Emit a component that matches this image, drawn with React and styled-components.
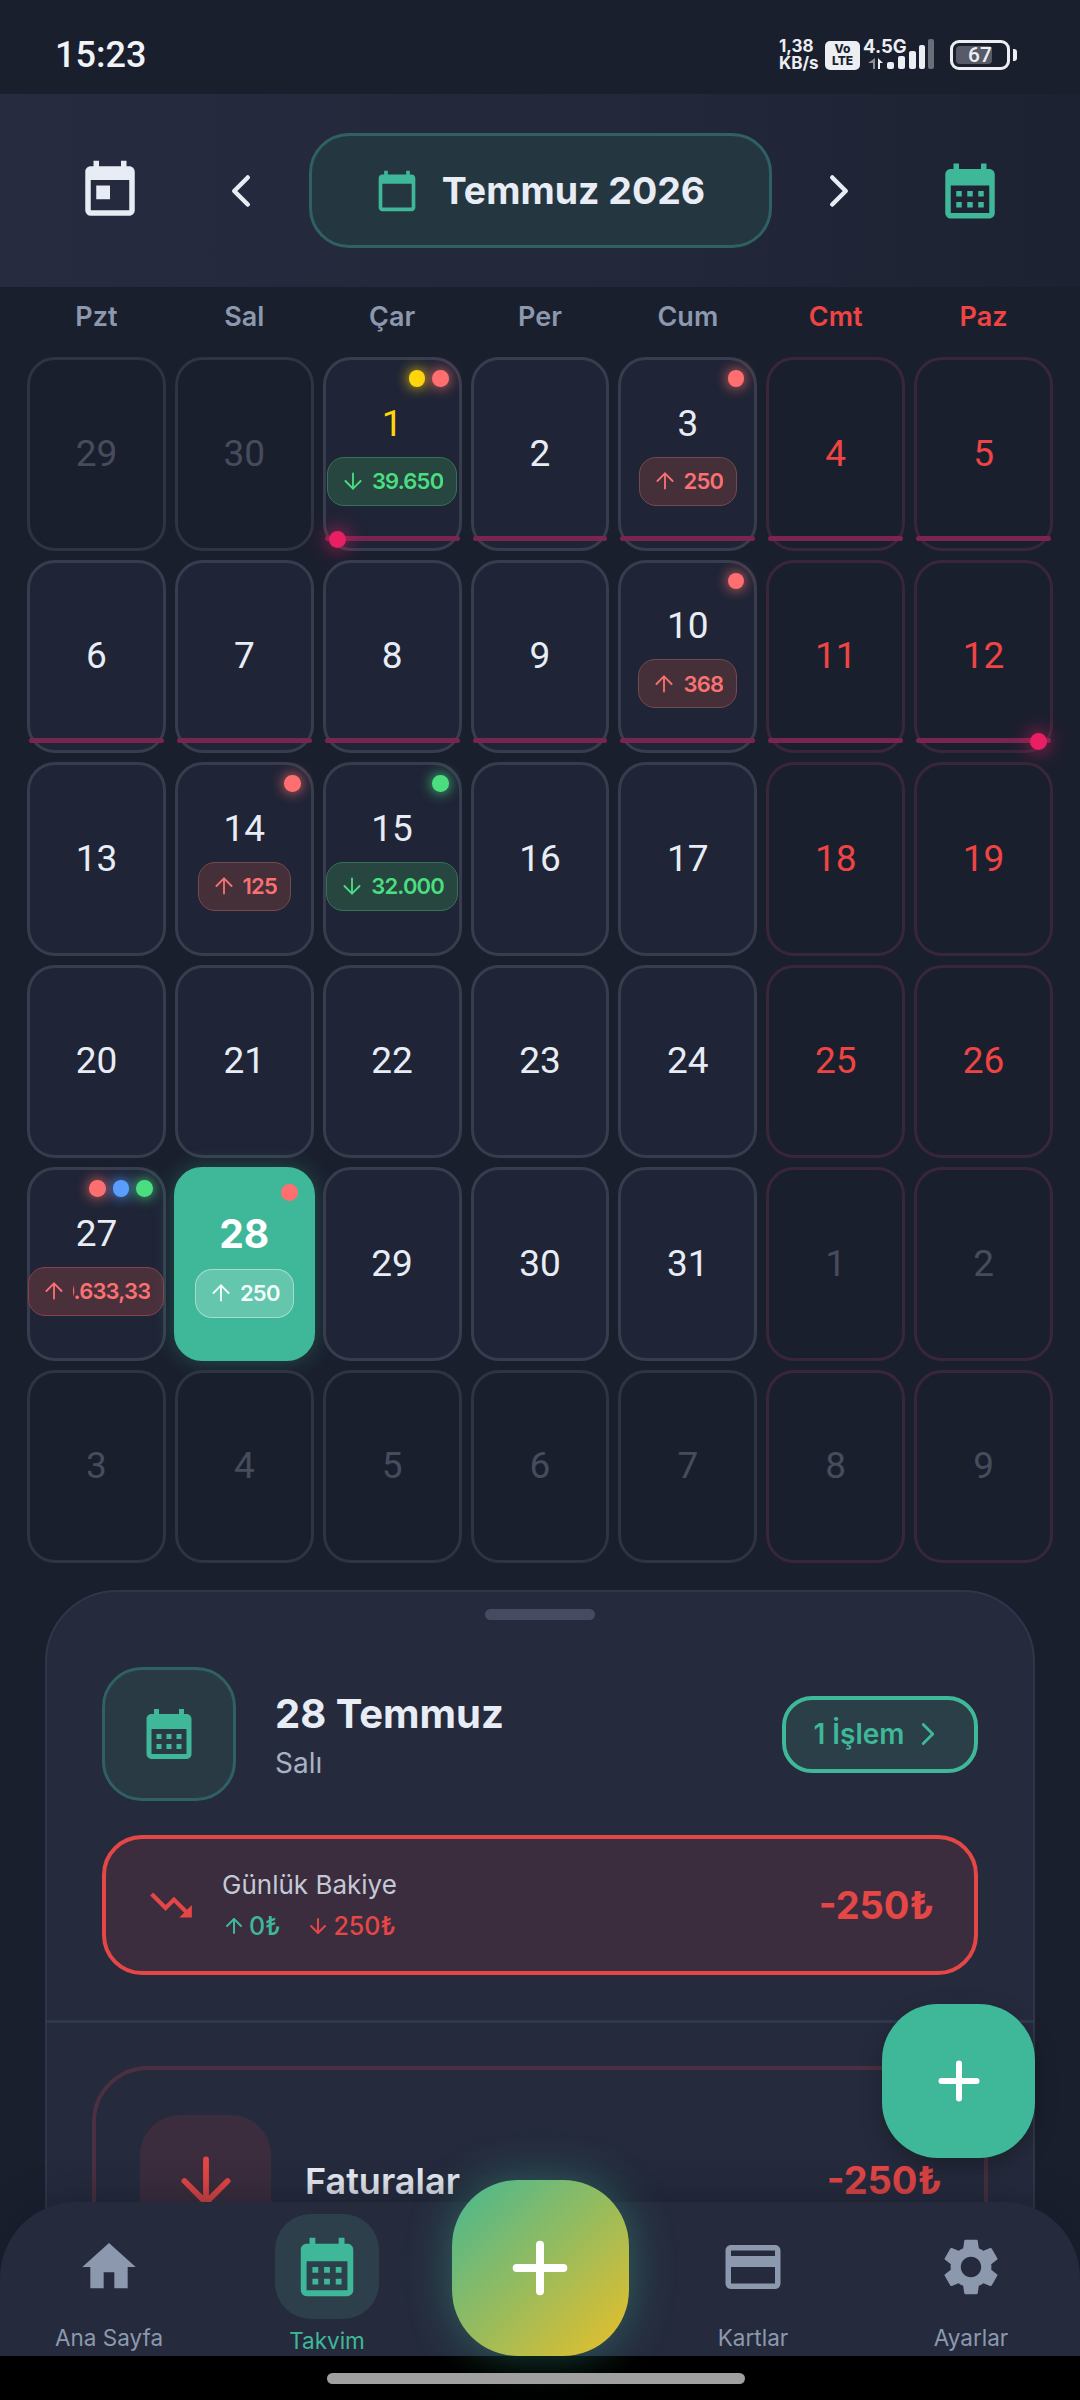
import styled, { createGlobalStyle } from "styled-components";
import { ArrowDown, ArrowUp, ChevronLeft, ChevronRight, Plus } from "lucide-react";
import {
    MdCalendarMonth,
    MdCalendarToday,
    MdCreditCard,
    MdHome,
    MdSettings,
    MdToday,
    MdTrendingDown,
} from "react-icons/md";

const TEAL = "#3eb898";
const RED = "#e54646";
const SOFT_RED = "#ff6f6f";
const GREEN = "#4ade80";
const BLUE = "#5b9dff";
const YELLOW = "#ffd60a";

const weekDays = ["Pzt", "Sal", "Çar", "Per", "Cum", "Cmt", "Paz"];

const days = [
    { n: 29, out: true },
    { n: 30, out: true },
    { n: 1, strip: true, marker: "start", today: true, dots: [YELLOW, SOFT_RED], chip: { dir: "down", value: "39.650", tone: "green" } },
    { n: 2, strip: true },
    { n: 3, strip: true, dots: [SOFT_RED], chip: { dir: "up", value: "250", tone: "red" } },
    { n: 4, strip: true },
    { n: 5, strip: true },
    { n: 6, strip: true },
    { n: 7, strip: true },
    { n: 8, strip: true },
    { n: 9, strip: true },
    { n: 10, strip: true, dots: [SOFT_RED], chip: { dir: "up", value: "368", tone: "red" } },
    { n: 11, strip: true },
    { n: 12, strip: true, marker: "end" },
    { n: 13 },
    { n: 14, dots: [SOFT_RED], chip: { dir: "up", value: "125", tone: "red" } },
    { n: 15, dots: [GREEN], chip: { dir: "down", value: "32.000", tone: "green" } },
    { n: 16 },
    { n: 17 },
    { n: 18 },
    { n: 19 },
    { n: 20 },
    { n: 21 },
    { n: 22 },
    { n: 23 },
    { n: 24 },
    { n: 25 },
    { n: 26 },
    { n: 27, dots: [SOFT_RED, BLUE, GREEN], chip: { dir: "up", value: "10.633,33", tone: "strong" } },
    { n: 28, selected: true, dots: [SOFT_RED], chip: { dir: "up", value: "250", tone: "light" } },
    { n: 29 },
    { n: 30 },
    { n: 31 },
    { n: 1, out: true },
    { n: 2, out: true },
    { n: 3, out: true },
    { n: 4, out: true },
    { n: 5, out: true },
    { n: 6, out: true },
    { n: 7, out: true },
    { n: 8, out: true },
    { n: 9, out: true },
];

const chipTones = {
    green: { bg: "#27463f", border: "#38705a", color: GREEN },
    red: { bg: "#45303a", border: "#76484f", color: "#f97171" },
    strong: { bg: "#4a303b", border: "#84434c", color: "#f97171" },
    light: { bg: "rgba(255,255,255,0.2)", border: "rgba(255,255,255,0.42)", color: "#f4fffb" },
};

const GlobalStyle = createGlobalStyle`
    html, body {
        margin: 0;
        padding: 0;
        background: #000;
    }
    * {
        box-sizing: border-box;
    }
`;

const Page = styled.div`
    position: relative;
    width: 1080px;
    height: 2400px;
    overflow: hidden;
    display: flex;
    flex-direction: column;
    background: #1a1f2e;
    color: #e8ecf4;
    font-family: Inter, "Noto Sans", sans-serif;
`;

const StatusBar = styled.div`
    height: 94px;
    flex-shrink: 0;
    padding: 0 70px 0 55px;
    display: flex;
    align-items: center;
    justify-content: space-between;
`;

const Clock = styled.span`
    font-family: Roboto, sans-serif;
    font-size: 36px;
    font-weight: 500;
    color: #f1f3f7;
    margin-top: 16px;
`;

const StatusIcons = styled.div`
    display: flex;
    align-items: center;
    margin-top: 16px;
`;

const NetSpeed = styled.div`
    width: 46px;
    font-size: 17px;
    font-weight: 700;
    line-height: 17px;
    color: #eceef2;
    text-align: left;
`;

const Volte = styled.div`
    width: 35px;
    height: 29px;
    border-radius: 5px;
    background: #eceef2;
    color: #1a1f2e;
    font-size: 12px;
    font-weight: 800;
    line-height: 12.5px;
    text-align: center;
    padding-top: 2px;
`;

const Signal = styled.div`
    width: 72px;
    height: 34px;
    margin-left: 3px;
    display: flex;
    flex-direction: column;
    font-size: 18.5px;
    font-weight: 700;
    line-height: 16px;
    color: #eceef2;
    position: relative;

    & svg {
        position: absolute;
        left: 0;
        top: 0;
    }
`;

const Battery = styled.div`
    position: relative;
    width: 60px;
    height: 30px;
    margin-left: 15px;
    border: 3px solid #eceef2;
    border-radius: 9px;
    padding: 3px;
    display: flex;
    align-items: center;
    justify-content: center;
    font-family: Roboto, sans-serif;
    font-size: 21px;
    font-weight: 500;
    color: #eceef2;

    &::before {
        content: "";
        position: absolute;
        left: 3px;
        top: 3px;
        bottom: 3px;
        width: 67%;
        border-radius: 4px;
        background: #565b67;
    }

    &::after {
        content: "";
        position: absolute;
        right: -10px;
        top: 6px;
        width: 4px;
        height: 12px;
        border-radius: 0 3px 3px 0;
        background: #eceef2;
    }

    & span {
        position: relative;
    }
`;

const Header = styled.header`
    height: 193px;
    flex-shrink: 0;
    display: flex;
    align-items: center;
    background: linear-gradient(90deg, #262b40, #222739 60%, #1d2233);
`;

const HeaderIconSlot = styled.div`
    width: ${(props) => props.$width}px;
    display: flex;
    justify-content: center;
    color: ${(props) => props.$color || "#e8ecf4"};
`;

const MonthNav = styled.div`
    flex: 1;
    margin: 0 -6px;
    display: flex;
    align-items: center;
    justify-content: space-between;
    color: #e8ecf4;
`;

const MonthPill = styled.div`
    width: 463px;
    height: 115px;
    border: 3px solid #2f6062;
    border-radius: 40px;
    background: #243740;
    display: flex;
    align-items: center;
    justify-content: center;
    gap: 23px;
    color: ${TEAL};
`;

const MonthTitle = styled.span`
    font-size: 37.5px;
    font-weight: 700;
    color: #e8ecf4;
`;

const WeekRow = styled.div`
    height: 70px;
    flex-shrink: 0;
    padding: 0 27px 12px;
    display: grid;
    grid-template-columns: repeat(7, minmax(0, 1fr));
    column-gap: 9px;
    align-items: center;
`;

const WeekDay = styled.div`
    text-align: center;
    font-size: 27px;
    font-weight: 600;
    color: ${(props) => (props.$weekend ? "#ef4444" : "#8c98ae")};
`;

const Grid = styled.div`
    padding: 0 27px;
    display: grid;
    grid-template-columns: repeat(7, minmax(0, 1fr));
    grid-auto-rows: 193.5px;
    gap: 9px;
    flex-shrink: 0;
`;

const Cell = styled.div`
    position: relative;
    min-width: 0;
    border-radius: 28px;
    border: 3px solid ${(props) => props.$borderColor};
    background: ${(props) => props.$bg};
    display: flex;
    flex-direction: column;
    align-items: center;
    justify-content: center;
    ${(props) =>
        props.$selected &&
        `
        box-shadow: 0 0 22px rgba(62, 184, 152, 0.32);
        margin: 0 -1px;
    `}
`;

const DayNumber = styled.div`
    font-family: ${(props) => (props.$selected ? "Inter, sans-serif" : "Roboto, sans-serif")};
    font-size: ${(props) => (props.$selected ? 39 : 37)}px;
    font-weight: ${(props) => (props.$selected ? 700 : 400)};
    line-height: ${(props) => (props.$selected ? 48 : 44)}px;
    color: ${(props) => props.$color};
`;

const Chip = styled.div`
    flex-shrink: 0;
    height: 49px;
    margin-top: 11px;
    padding: 0 13px 0 12px;
    border-radius: 17px;
    border: 1.5px solid ${(props) => chipTones[props.$tone].border};
    background: ${(props) => chipTones[props.$tone].bg};
    color: ${(props) => chipTones[props.$tone].color};
    display: flex;
    align-items: center;
    gap: 6px;
    font-size: 22px;
    font-weight: 600;
    letter-spacing: -0.8px;
`;

const ChipValue = styled.div`
    max-width: 77px;
    overflow: hidden;
    display: flex;
    justify-content: flex-end;
    white-space: nowrap;
`;

const Dots = styled.div`
    position: absolute;
    top: ${(props) => (props.$selected ? 14 : 10)}px;
    right: ${(props) => (props.$selected ? 14 : 10)}px;
    display: flex;
    gap: 7px;
`;

const Dot = styled.span`
    width: 16.5px;
    height: 16.5px;
    border-radius: 50%;
    background: ${(props) => props.$color};
    box-shadow: ${(props) => (props.$flat ? "none" : `0 0 14px ${props.$color}`)};
`;

const Strip = styled.span`
    position: absolute;
    left: -1px;
    right: -1px;
    bottom: 7px;
    height: 5px;
    border-radius: 3px;
    background: #7a2450;
`;

const Marker = styled.span`
    position: absolute;
    bottom: 0;
    ${(props) => (props.$end ? "right: 3px" : "left: 3px")};
    width: 17px;
    height: 17px;
    border-radius: 50%;
    background: #ea1f63;
    box-shadow: 0 0 18px 3px rgba(234, 31, 99, 0.55);
`;

const Sheet = styled.section`
    flex-shrink: 0;
    margin: 27px 45px 0;
    height: 900px;
    border: 2px solid #2f3649;
    border-radius: 72px 72px 0 0;
    background: #252b3d;
`;

const Handle = styled.div`
    width: 110px;
    height: 11px;
    margin: 17px auto 0;
    border-radius: 6px;
    background: #454c62;
`;

const SheetHeader = styled.div`
    margin-top: 47px;
    padding: 0 55px;
    display: flex;
    align-items: center;
    gap: 39px;
`;

const DayIcon = styled.div`
    width: 134px;
    height: 134px;
    flex-shrink: 0;
    border: 3px solid #2f6062;
    border-radius: 40px;
    background: #2a3a44;
    color: ${TEAL};
    display: flex;
    align-items: center;
    justify-content: center;
`;

const DayText = styled.div`
    flex: 1;
`;

const DayTitle = styled.div`
    font-size: 40px;
    font-weight: 700;
    line-height: 48px;
    color: #e8ecf4;
`;

const DaySub = styled.div`
    margin-top: 9px;
    font-size: 28px;
    line-height: 32px;
    color: #a9b2c3;
`;

const CountButton = styled.div`
    width: 196px;
    height: 77px;
    border: 4px solid ${TEAL};
    border-radius: 30px;
    background: #2a3f48;
    color: ${TEAL};
    display: flex;
    align-items: center;
    justify-content: center;
    gap: 4px;
    font-size: 28px;
    font-weight: 600;
`;

const BalanceCard = styled.div`
    height: 140px;
    margin: 34px 55px 0;
    padding: 0 40px 0 40px;
    border: 4px solid ${RED};
    border-radius: 40px;
    background: #3b2d3d;
    display: flex;
    align-items: center;
    gap: 26px;
    color: ${RED};
`;

const BalanceText = styled.div`
    flex: 1;
`;

const BalanceLabel = styled.div`
    font-size: 26px;
    line-height: 32px;
    color: #c3c9d6;
`;

const BalanceRow = styled.div`
    margin-top: 10px;
    display: flex;
    gap: 26px;
    font-size: 25px;
    font-weight: 500;
`;

const Flow = styled.span`
    display: flex;
    align-items: center;
    gap: 3px;
    color: ${(props) => props.$color};
`;

const BalanceAmount = styled.div`
    font-size: 38px;
    font-weight: 700;
`;

const Divider = styled.div`
    height: 3px;
    margin-top: 45px;
    background: #2e3a4c;
`;

const CategoryCard = styled.div`
    height: 300px;
    margin: 43px 45px 0;
    padding: 45px 42px 0 44px;
    border: 4px solid #4a3040;
    border-radius: 56px;
    display: flex;
    align-items: flex-start;
    gap: 34px;
`;

const CategoryIcon = styled.div`
    width: 131px;
    height: 131px;
    flex-shrink: 0;
    border-radius: 40px;
    background: #3b2d3d;
    color: ${RED};
    display: flex;
    align-items: center;
    justify-content: center;
`;

const CategoryName = styled.div`
    flex: 1;
    margin-top: 45px;
    font-size: 36px;
    font-weight: 600;
    line-height: 42px;
    color: #e8ecf4;
`;

const CategoryAmount = styled.div`
    margin-top: 42px;
    font-size: 38px;
    font-weight: 700;
    line-height: 46px;
    color: ${RED};
`;

const Fab = styled.div`
    position: absolute;
    left: 882px;
    top: 2004px;
    width: 153px;
    height: 154px;
    border-radius: 56px;
    background: ${TEAL};
    box-shadow: 0 8px 22px rgba(0, 0, 0, 0.25);
    color: #fff;
    display: flex;
    align-items: center;
    justify-content: center;
`;

const BottomArea = styled.div`
    position: absolute;
    left: 0;
    right: 0;
    bottom: 0;
`;

const Nav = styled.nav`
    height: 154px;
    display: grid;
    grid-template-columns: 218px 218px 1fr 218px 218px;
    border-radius: 76px 76px 0 0;
    background: #252b3d;
    box-shadow: 0 -10px 30px rgba(20, 24, 36, 0.35);
`;

const NavItem = styled.div`
    display: flex;
    flex-direction: column;
    align-items: center;
    padding-top: 12px;
    color: ${(props) => (props.$active ? TEAL : "#8c98ae")};
`;

const NavIcon = styled.div`
    width: 104px;
    height: 105px;
    border-radius: 36px;
    background: ${(props) => (props.$active ? "#2c3f4b" : "transparent")};
    display: flex;
    align-items: center;
    justify-content: center;
`;

const NavLabel = styled.div`
    margin-top: ${(props) => (props.$active ? 8 : 5)}px;
    font-size: 22.5px;
    line-height: 28px;
`;

const CenterButton = styled.div`
    justify-self: center;
    width: 177px;
    height: 176px;
    margin-top: -22px;
    border-radius: 66px;
    background: linear-gradient(135deg, #45b892, #eabf28);
    box-shadow: 0 0 44px rgba(62, 184, 152, 0.4);
    color: #fff;
    display: flex;
    align-items: center;
    justify-content: center;
`;

const HomeArea = styled.div`
    height: 44px;
    background: #000;
    display: flex;
    justify-content: center;
    padding: 17px 8px 0 0;
`;

const HomeBar = styled.div`
    width: 418px;
    height: 11px;
    border-radius: 6px;
    background: #a0a0a0;
`;

const SignalBars = () => (
    <svg width="72" height="34" viewBox="0 0 72 34">
        <path d="M12 20v11h-2v-6l-5 0z" fill="#8a8d95" />
        <path d="M15 20l5 5h-3v6h-2z" fill="#eceef2" />
        <rect x="24" y="24" width="7" height="7" rx="2" fill="#eceef2" />
        <rect x="35" y="18" width="7" height="13" rx="2" fill="#eceef2" />
        <rect x="46" y="13" width="7" height="18" rx="2" fill="#eceef2" />
        <rect x="56" y="7" width="6" height="24" rx="2" fill="#eceef2" />
        <rect x="65" y="1" width="6" height="30" rx="2" fill="#6a6e78" />
    </svg>
);

const DayCell = ({ day, col }) => {
    const weekend = col >= 5;
    const { n, out, today, selected, strip, marker, dots, chip } = day;

    let color = "#e8ecf4";
    if (weekend) color = "#ef4444";
    if (today) color = "#ffd60a";
    if (out) color = "#474c5c";
    if (selected) color = "#ffffff";

    let borderColor = "#383d4e";
    if (out) borderColor = "#2f3442";
    if (weekend) borderColor = "#39263a";
    if (selected) borderColor = TEAL;

    let bg = "#1f2436";
    if (out || weekend) bg = "#1a1f2e";
    if (selected) bg = TEAL;

    const Arrow = chip && chip.dir === "up" ? ArrowUp : ArrowDown;

    return (
        <Cell $borderColor={borderColor} $bg={bg} $selected={selected}>
            {dots && (
                <Dots $selected={selected}>
                    {dots.map((dot, i) => (
                        <Dot key={i} $color={dot} $flat={selected} />
                    ))}
                </Dots>
            )}
            <DayNumber $color={color} $selected={selected}>
                {n}
            </DayNumber>
            {chip && (
                <Chip $tone={chip.tone}>
                    <Arrow size={26} strokeWidth={1.7} />
                    <ChipValue>
                        <span>{chip.value}</span>
                    </ChipValue>
                </Chip>
            )}
            {strip && <Strip />}
            {marker && <Marker $end={marker === "end"} />}
        </Cell>
    );
};

const App = () => {
    return (
        <Page>
            <GlobalStyle />
            <StatusBar>
                <Clock>15:23</Clock>
                <StatusIcons>
                    <NetSpeed>
                        1,38
                        <br />
                        KB/s
                    </NetSpeed>
                    <Volte>
                        Vo
                        <br />
                        LTE
                    </Volte>
                    <Signal>
                        <SignalBars />
                        <span>4.5G</span>
                    </Signal>
                    <Battery>
                        <span>67</span>
                    </Battery>
                </StatusIcons>
            </StatusBar>

            <Header>
                <HeaderIconSlot $width={220}>
                    <MdToday size={66} />
                </HeaderIconSlot>
                <MonthNav>
                    <ChevronLeft size={54} strokeWidth={2} />
                    <MonthPill>
                        <MdCalendarToday size={44} />
                        <MonthTitle>Temmuz 2026</MonthTitle>
                    </MonthPill>
                    <ChevronRight size={54} strokeWidth={2} />
                </MonthNav>
                <HeaderIconSlot $width={220} $color={TEAL}>
                    <MdCalendarMonth size={66} />
                </HeaderIconSlot>
            </Header>

            <WeekRow>
                {weekDays.map((name, i) => (
                    <WeekDay key={name} $weekend={i >= 5}>
                        {name}
                    </WeekDay>
                ))}
            </WeekRow>

            <Grid>
                {days.map((day, i) => (
                    <DayCell key={i} day={day} col={i % 7} />
                ))}
            </Grid>

            <Sheet>
                <Handle />
                <SheetHeader>
                    <DayIcon>
                        <MdCalendarMonth size={60} />
                    </DayIcon>
                    <DayText>
                        <DayTitle>28 Temmuz</DayTitle>
                        <DaySub>Salı</DaySub>
                    </DayText>
                    <CountButton>
                        1 İşlem
                        <ChevronRight size={38} strokeWidth={1.8} />
                    </CountButton>
                </SheetHeader>
                <BalanceCard>
                    <MdTrendingDown size={50} />
                    <BalanceText>
                        <BalanceLabel>Günlük Bakiye</BalanceLabel>
                        <BalanceRow>
                            <Flow $color={TEAL}>
                                <ArrowUp size={24} strokeWidth={2} />
                                0₺
                            </Flow>
                            <Flow $color={RED}>
                                <ArrowDown size={24} strokeWidth={2} />
                                250₺
                            </Flow>
                        </BalanceRow>
                    </BalanceText>
                    <BalanceAmount>-250₺</BalanceAmount>
                </BalanceCard>
                <Divider />
                <CategoryCard>
                    <CategoryIcon>
                        <ArrowDown size={74} strokeWidth={1.9} />
                    </CategoryIcon>
                    <CategoryName>Faturalar</CategoryName>
                    <CategoryAmount>-250₺</CategoryAmount>
                </CategoryCard>
            </Sheet>

            <Fab>
                <Plus size={60} strokeWidth={2.4} />
            </Fab>

            <BottomArea>
                <Nav>
                    <NavItem>
                        <NavIcon>
                            <MdHome size={64} />
                        </NavIcon>
                        <NavLabel>Ana Sayfa</NavLabel>
                    </NavItem>
                    <NavItem $active>
                        <NavIcon $active>
                            <MdCalendarMonth size={70} />
                        </NavIcon>
                        <NavLabel $active>Takvim</NavLabel>
                    </NavItem>
                    <CenterButton>
                        <Plus size={80} strokeWidth={2.4} />
                    </CenterButton>
                    <NavItem>
                        <NavIcon>
                            <MdCreditCard size={66} />
                        </NavIcon>
                        <NavLabel>Kartlar</NavLabel>
                    </NavItem>
                    <NavItem>
                        <NavIcon>
                            <MdSettings size={68} />
                        </NavIcon>
                        <NavLabel>Ayarlar</NavLabel>
                    </NavItem>
                </Nav>
                <HomeArea>
                    <HomeBar />
                </HomeArea>
            </BottomArea>
        </Page>
    );
};

export default App;
